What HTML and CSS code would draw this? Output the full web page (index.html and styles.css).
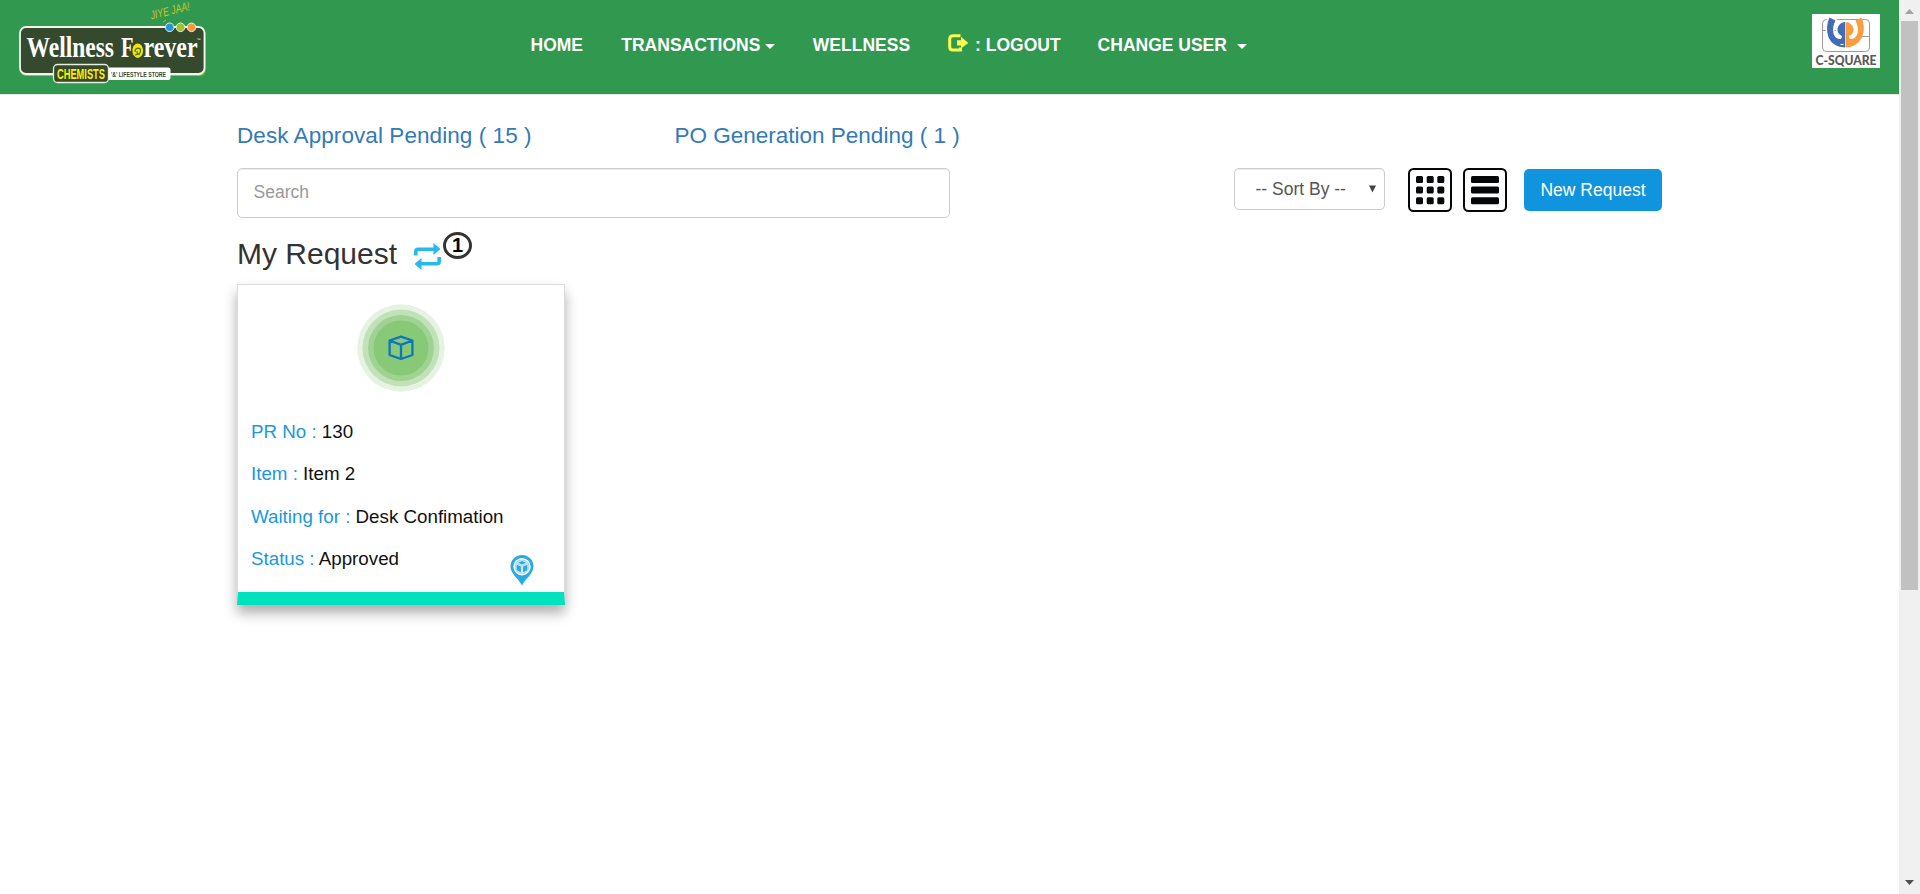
FILE: index.html
```html
<!DOCTYPE html>
<html lang="en">
<head>
<meta charset="utf-8">
<title>My Request</title>
<link rel="stylesheet" href="styles.css">
</head>
<body>
<div class="page">
  <header class="navbar">
    <svg class="brand" width="215" height="94" viewBox="0 0 215 94">
      <text x="0" y="0" class="jiye" textLength="40" lengthAdjust="spacingAndGlyphs" transform="translate(151.500 19.500) rotate(-14)">JIYE JAA!</text>
      <path d="M163 22l3-2" stroke="#c9c626" stroke-width=".8"/>
      <rect x="20.5" y="28" width="185" height="48" rx="6" fill="#8cc832"/>
      <rect x="20" y="27" width="184.5" height="47" rx="6" fill="#35492d" stroke="#f4f6ee" stroke-width="1.8"/>
      <text x="26.500" y="57" class="wellness" textLength="87.500" lengthAdjust="spacingAndGlyphs">Wellness</text>
      <text x="121" y="57" class="wellness" textLength="12.500" lengthAdjust="spacingAndGlyphs">F</text>
      <text x="143.500" y="57" class="wellness" textLength="54" lengthAdjust="spacingAndGlyphs">rever</text>
      <text x="196.500" y="41" class="tm">™</text>
      <ellipse cx="137.700" cy="50.700" rx="5.300" ry="7.200" fill="#f7e600"/>
      <path d="M135 52c0-5 6-5 5.500-1s-5 4-3 0M135 55l5-1" fill="none" stroke="#3b6a26" stroke-width="1.100"/>
      <circle cx="169.700" cy="27.300" r="4.300" fill="#2596d8" stroke="#e8f0dc"/>
      <circle cx="180.500" cy="27.300" r="4.300" fill="#9fc22c" stroke="#e8f0dc"/>
      <circle cx="191.500" cy="27.300" r="4.300" fill="#f79a3e" stroke="#e8f0dc"/>
      <rect x="104" y="67.500" width="66.500" height="12.500" rx="2.500" fill="#fff"/>
      <rect x="53.500" y="64.500" width="55" height="18" rx="4" fill="#35492d" stroke="#e9eee0" stroke-width="1.300"/>
      <text x="57" y="79" class="chemists" textLength="48" lengthAdjust="spacingAndGlyphs">CHEMISTS</text>
      <text x="111" y="77" class="lifestyle" textLength="55" lengthAdjust="spacingAndGlyphs">'&amp;' LIFESTYLE STORE</text>
    </svg>
    <nav class="menu">
      <a class="menu-item home">HOME</a>
      <a class="menu-item">TRANSACTIONS<span class="caret"></span></a>
      <a class="menu-item">WELLNESS</a>
      <a class="menu-item logout"><svg width="21" height="18" viewBox="0 0 21 18"><path d="M12.500 1.700H5Q1.700 1.700 1.700 5V13Q1.700 16 5 16H12.500V13.500" fill="none" stroke="#fdfb4c" stroke-width="3"/><path d="M9 6.300H13V2.800L20.300 9L13 14.500V11.500H9Z" fill="#fdfb4c"/></svg>: LOGOUT</a>
      <a class="menu-item">CHANGE USER<span class="caret wide"></span></a>
    </nav>
    <svg class="partner" width="68" height="54" viewBox="0 0 68 54">
      <rect width="68" height="54" fill="#fff"/>
      <rect x="10.500" y="5.500" width="47" height="32" rx="4" fill="none" stroke="#999"/>
      <path d="M10 16.500H24M45 22.500H57" stroke="#999"/>
      <path d="M17.500 3.500L23.500 6.500C19 15 21 24 27 25Q30 25.500 30 22Q25 20 25.500 14.500Q27 8.500 33 8V33.500Q21 33 16.500 23.500Q13 13 17.500 3.500Z" fill="#446bb5" stroke="#fff" stroke-width="3" paint-order="stroke"/>
      <path d="M49.500 3.500L43.500 6.500C48 15 46 24 40 25Q37 25.500 37 22Q42 20 41.500 14.500Q40 8.500 33.500 8V33.500Q45 33 50 23.500Q54 13 49.500 3.500Z" fill="#f99d40"/>
      <path d="M28.500 30.500h3" stroke="#fff"/>
      <text x="3.500" y="50.500" class="csquare" textLength="61" lengthAdjust="spacingAndGlyphs">C-SQUARE</text>
    </svg>
  </header>
  <main class="content">
    <div class="pending">
      <a class="pending-desk">Desk Approval Pending ( 15 )</a>
      <a>PO Generation Pending ( 1 )</a>
    </div>
    <div class="controls">
      <div class="search">Search</div>
      <div class="tools">
        <div class="sort"><span>-- Sort By --</span><svg width="7" height="8" viewBox="0 0 7 8"><path d="M0 .5H7L3.500 7.500Z" fill="#444"/></svg></div>
        <svg class="view-grid" width="44" height="44" viewBox="0 0 44 44">
          <rect x="1" y="1" width="42" height="42" rx="4.500" fill="#fff" stroke="#050708" stroke-width="2"/>
          <g fill="#050708"><rect x="8" y="8" width="7" height="7" rx="1.500"/><rect x="18.700" y="8" width="7" height="7" rx="1.500"/><rect x="29.300" y="8" width="7" height="7" rx="1.500"/><rect x="8" y="18.600" width="7" height="7" rx="1.500"/><rect x="18.700" y="18.600" width="7" height="7" rx="1.500"/><rect x="29.300" y="18.600" width="7" height="7" rx="1.500"/><rect x="8" y="29.300" width="7" height="7" rx="1.500"/><rect x="18.700" y="29.300" width="7" height="7" rx="1.500"/><rect x="29.300" y="29.300" width="7" height="7" rx="1.500"/></g>
        </svg>
        <svg class="view-list" width="44" height="44" viewBox="0 0 44 44">
          <rect x="1" y="1" width="42" height="42" rx="4.500" fill="#fff" stroke="#050708" stroke-width="2"/>
          <g fill="#050708"><rect x="8" y="8" width="28" height="7" rx="1.500"/><rect x="8" y="18.600" width="28" height="7" rx="1.500"/><rect x="8" y="29.300" width="28" height="7" rx="1.500"/></g>
        </svg>
        <button class="new-request">New Request</button>
      </div>
    </div>
    <h1 class="title">My Request
      <svg class="refresh" width="27" height="27" viewBox="0 0 27 27"><g fill="none" stroke="#27baf0" stroke-width="3.600"><path d="M1.800 12.500V8.500Q1.800 6.200 4 6.200H20"/><path d="M25.200 14V18.500Q25.200 20.800 23 20.800H6"/></g><path d="M19.500 0L26.500 6L19.500 12ZM7.500 15L.5 21L7.500 27Z" fill="#27baf0"/></svg><span class="count">1</span>
    </h1>
    <article class="card">
      <svg class="card-icon" width="88" height="88" viewBox="0 0 88 88">
        <circle cx="44" cy="44" r="43.700" fill="#e6f3e2"/><circle cx="44" cy="44" r="38.500" fill="#c1e2b8"/><circle cx="44" cy="44" r="33" fill="#9fd391"/><circle cx="44" cy="44" r="27.500" fill="#88c977"/>
        <path d="M44 32.700L55.400 36.500V51L44 55L32.600 51V36.500ZM32.600 36.500L44 40.800L55.400 36.500M44 40.800V55" fill="none" stroke="#0e76bc" stroke-width="2.300" stroke-linejoin="round"/>
      </svg>
      <div class="fields">
        <p><span class="label">PR No :</span> 130</p>
        <p><span class="label">Item :</span> Item 2</p>
        <p><span class="label">Waiting for :</span> Desk Confimation</p>
        <p><span class="label">Status :</span> Approved</p>
      </div>
      <svg class="pin" width="24" height="31" viewBox="0 0 24 31">
        <path d="M12 30.500C9 24 .5 19 .5 11.500A11.500 11.500 0 0 1 23.500 11.500C23.500 19 15 24 12 30.500Z" fill="#29abe2"/>
        <circle cx="12" cy="11.700" r="8.700" fill="#fff"/>
        <circle cx="12" cy="11.700" r="7.300" fill="#8fd3f0"/>
        <path d="M12 5.500L17 7.700L12 10L7 7.700ZM6.200 9L11.400 11.300V18L6.200 15.500ZM17.800 9L12.600 11.300V18L17.800 15.500Z" fill="#29abe2" stroke="#fff" stroke-width=".7"/>
      </svg>
    </article>
  </main>
</div>
<div class="scrollbar">
  <svg width="21" height="21" viewBox="0 0 21 21"><path d="M6 14H15L10.500 9Z" fill="#a3a3a3"/></svg>
  <div class="thumb"></div>
  <svg class="down" width="21" height="21" viewBox="0 0 21 21"><path d="M6 7H15L10.500 12Z" fill="#505050"/></svg>
</div>
</body>
</html>
```
FILE: styles.css
```css
* { box-sizing: border-box; }
body {
  margin: 0;
  height: 894px;
  display: flex;
  overflow: hidden;
  background: #fff;
  font-family: "Liberation Sans", Arial, sans-serif;
  font-size: 17.5px;
  line-height: 25px;
}
svg { display: block; flex: none; }
.page { flex: 1; }
.navbar {
  height: 95px;
  display: flex;
  align-items: flex-start;
  background: #319850;
  border-bottom: 1px solid #e7e7e7;
}
.jiye { font: italic 12px "Liberation Sans", sans-serif; fill: #c9c626; }
.wellness { font: bold 29px "Liberation Serif", serif; fill: #fff; }
.tm { font: 4px "Liberation Sans", sans-serif; fill: #fff; }
.chemists { font: bold 15px "Liberation Sans", sans-serif; fill: #fff200; }
.lifestyle { font: bold 8px "Liberation Sans", sans-serif; fill: #35492d; }
.csquare { font: 900 13.5px Lato, sans-serif; fill: #58595b; }
.menu {
  display: flex;
  gap: 37.5px;
  margin: 33px 0 0 315.5px;
  color: #fff;
  font-weight: bold;
  white-space: nowrap;
}
.menu-item { display: flex; align-items: center; }
.home { margin-right: .8px; }
.logout svg { margin: -5px 6.5px 0 0; }
.logout { margin-right: -.5px; }
.caret {
  margin: 1px 0 0 5px;
  border: 5px solid transparent;
  border-top-color: #fff;
  border-bottom: 0;
}
.caret.wide { margin-left: 10px; }
.partner { margin: 14px 19px 0 auto; overflow: visible; }

.content { width: 1425px; margin-left: 237px; padding-top: 28px; }
.pending { display: flex; color: #337ab7; font-size: 22.5px; }
.pending-desk { width: 437.5px; letter-spacing: .07px; }
.controls { display: flex; justify-content: space-between; margin-top: 20px; height: 50px; }
.search {
  width: 713px;
  height: 50px;
  padding: 11px 15.5px;
  border: 1px solid #ccc;
  border-radius: 5px;
  box-shadow: inset 0 1px 1px rgba(0, 0, 0, .075);
  color: #999;
}
.tools { display: flex; align-items: flex-start; }
.sort {
  width: 151px;
  height: 42px;
  display: flex;
  align-items: center;
  justify-content: space-between;
  padding: 0 8px 0 20.5px;
  border: 1px solid #ccc;
  border-radius: 5px;
  box-shadow: inset 0 1px 1px rgba(0, 0, 0, .075);
  color: #555;
}
.view-grid { margin-left: 23px; }
.view-list { margin-left: 11px; }
.new-request {
  width: 138px;
  height: 42px;
  margin: 1px 0 0 17px;
  padding: 0;
  border: 0;
  border-radius: 5px;
  background: #1094de;
  color: #fff;
  font: inherit;
}
.title {
  display: flex;
  height: 33px;
  margin: 19px 0 14px;
  color: #333;
  font-size: 30px;
  font-weight: 400;
  line-height: 33px;
}
.refresh { margin: 6px 0 0 17px; }
.count {
  width: 29px;
  height: 27px;
  margin: -5px 0 0 2px;
  border: 3px solid #333;
  border-radius: 50%;
  color: #000;
  font-size: 20px;
  font-weight: bold;
  line-height: 21px;
  text-align: center;
}
.card {
  position: relative;
  width: 328px;
  height: 321px;
  padding: 19px 13px 0;
  border: 1px solid #dadada;
  border-bottom: 13px solid #00e1bd;
  box-shadow: 0 8px 12px rgba(0, 0, 0, .32);
  color: #111;
  font-size: 18.75px;
}
.card-icon { margin: 0 auto; }
.fields { padding-top: 19px; }
.fields p { margin: 0; line-height: 42.4px; }
.label { color: #1b98de; }
.pin { position: absolute; right: 30px; bottom: 6px; }

.scrollbar { width: 21px; display: flex; flex-direction: column; background: #f0f0f0; }
.thumb { width: 17px; height: 569px; margin-left: 2px; background: #c1c1c1; }
.down { margin-top: auto; }
```
